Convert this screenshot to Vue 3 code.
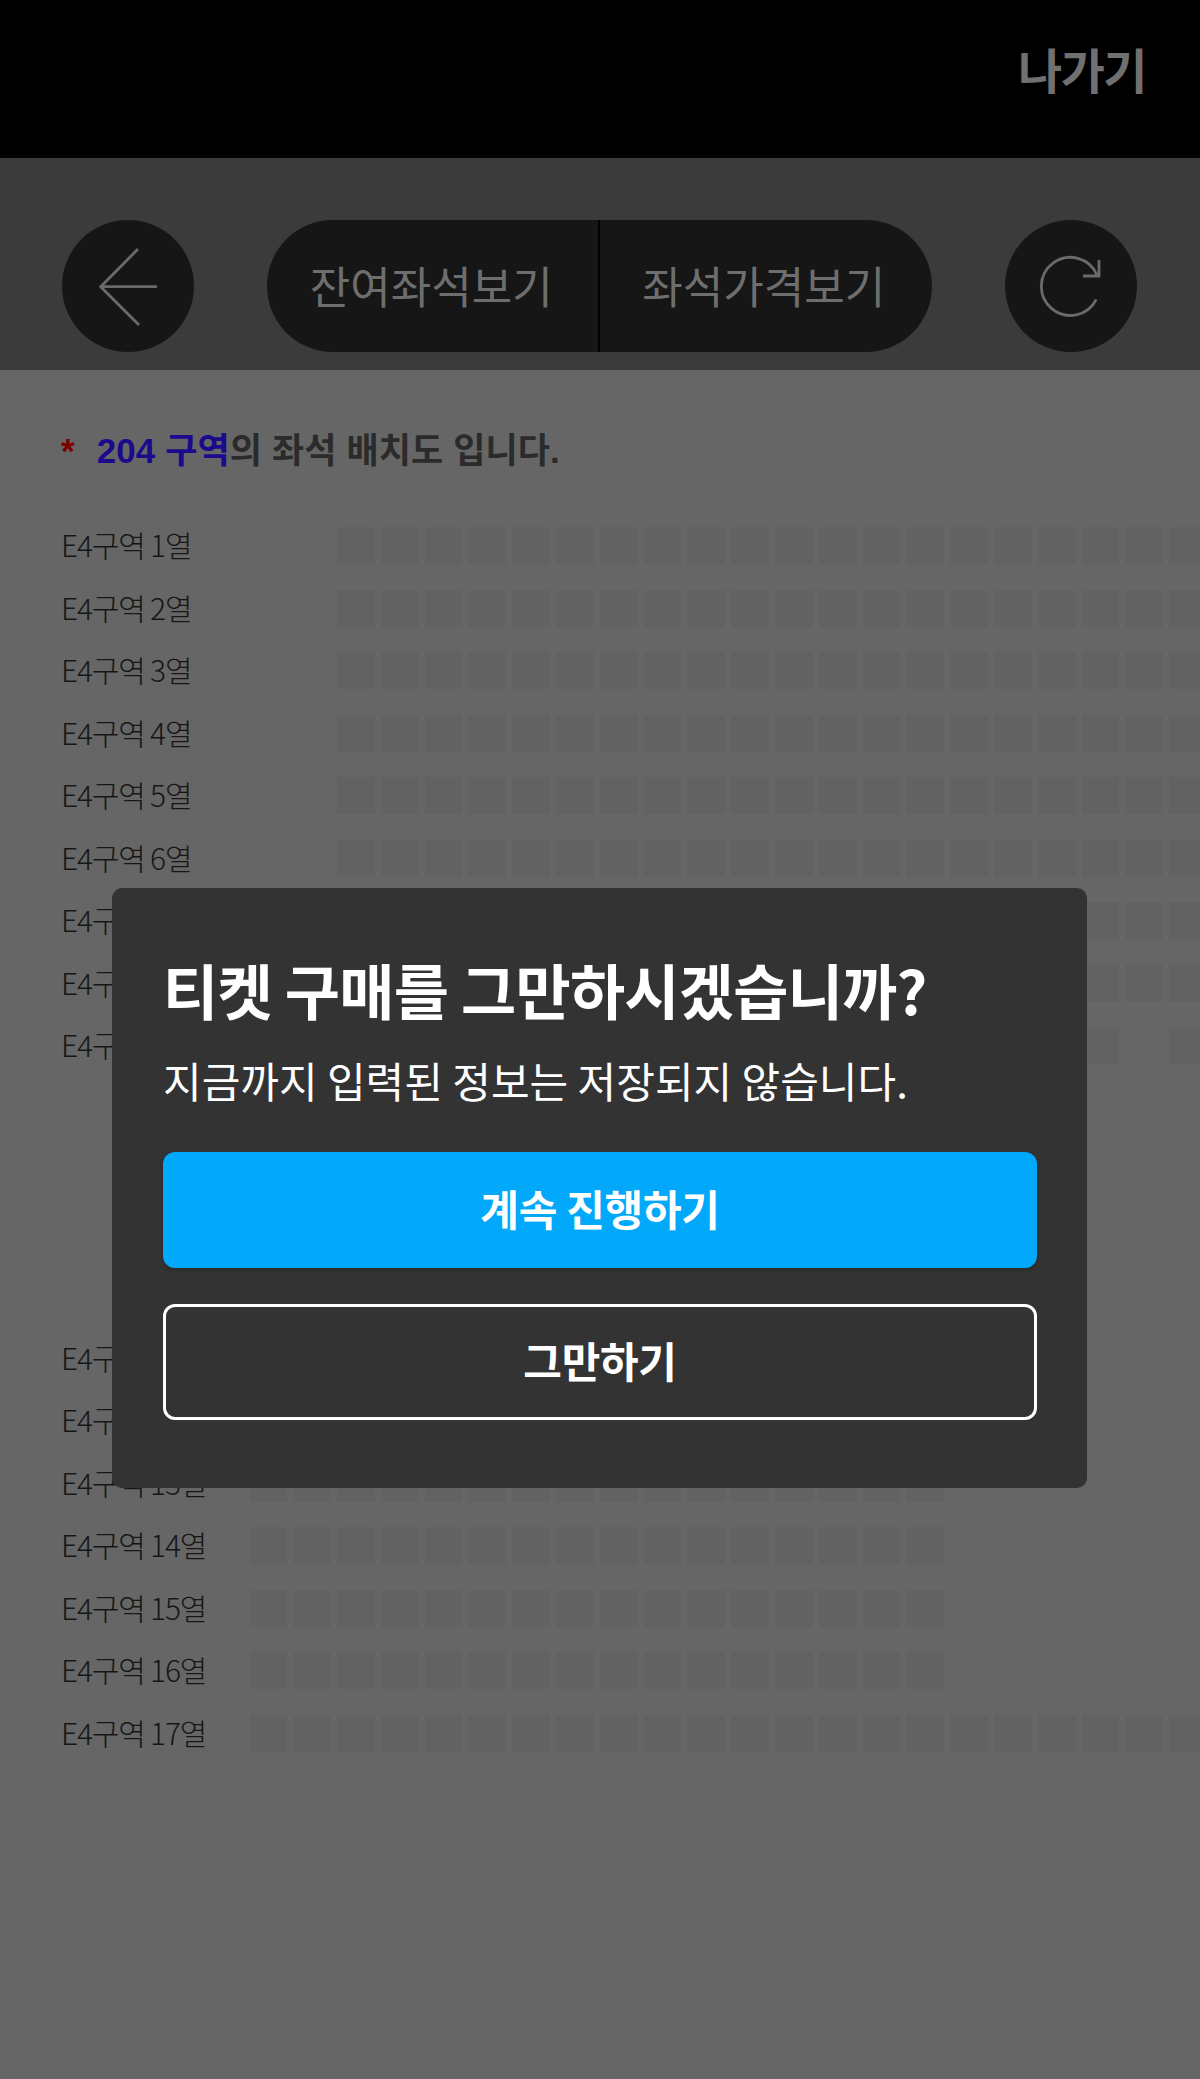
<template>
  <div class="seat-page">
    <div class="top-bar">
      <span class="exit">나가기</span>
    </div>

    <div class="tool-bar">
      <button class="round-btn">
        <svg viewBox="0 0 132 132" width="132" height="132">
          <path d="M76 29 L38.7 66.7 L77 105 M38.7 66.7 H95" />
        </svg>
      </button>
      <div class="view-switch">
        <button class="switch-item">잔여좌석보기</button>
        <button class="switch-item">좌석가격보기</button>
      </div>
      <button class="round-btn">
        <svg viewBox="0 0 132 132" width="132" height="132">
          <path d="M91.3 79.3 A29 29 0 1 1 92 55 M94 40 V56 H78" />
        </svg>
      </button>
    </div>

    <div class="seat-content">
      <p class="guide">
        <span class="star">*</span>
        <span class="zone">204 구역</span>의 좌석 배치도 입니다.
      </p>

      <div
        v-for="row in rows"
        :key="row.no"
        class="seat-row"
        :class="{ 'after-gap': row.no === 11 }"
      >
        <span class="row-name">E4구역 {{ row.no }}열</span>
        <div class="seats">
          <span
            v-for="(on, i) in row.seats"
            :key="i"
            class="seat"
            :class="{ empty: !on }"
          ></span>
        </div>
      </div>
    </div>

    <div class="dialog">
      <h2 class="dialog-title">티켓 구매를 그만하시겠습니까?</h2>
      <p class="dialog-text">지금까지 입력된 정보는 저장되지 않습니다.</p>
      <button class="dialog-btn primary">계속 진행하기</button>
      <button class="dialog-btn outline">그만하기</button>
    </div>
  </div>
</template>

<script setup>
const SLOTS = 22

// 1~9열은 앞 두 칸이 비어 있음
const makeRow = (no) => {
  const seats = []
  for (let i = 0; i < SLOTS; i++) {
    let on = true
    if (no < 10 && i < 2) on = false
    if (no === 9 && i === 20) on = false
    if (no >= 11 && no <= 16 && i > 15) on = false
    seats.push(on)
  }
  return { no, seats }
}

const rowNumbers = [1, 2, 3, 4, 5, 6, 7, 8, 9, 11, 12, 13, 14, 15, 16, 17]
const rows = rowNumbers.map(makeRow)
</script>

<style scoped>
.seat-page {
  position: relative;
  width: 1200px;
  height: 2079px;
  overflow: hidden;
  background: #666;
  font-family: "Noto Sans CJK KR", "Liberation Sans", sans-serif;
}

.top-bar {
  height: 158px;
  background: #000;
  display: flex;
  justify-content: flex-end;
  padding: 43px 54px 0 0;
  box-sizing: border-box;
}

.exit {
  font-size: 48px;
  line-height: 50px;
  font-weight: 700;
  letter-spacing: -1.5px;
  color: #707070;
}

.tool-bar {
  height: 212px;
  box-sizing: border-box;
  padding: 62px 63px 0 62px;
  background: #3b3b3b;
  display: flex;
  justify-content: space-between;
  align-items: flex-start;
}

.round-btn {
  width: 132px;
  height: 132px;
  padding: 0;
  border: none;
  border-radius: 50%;
  background: #161616;
}

.round-btn svg {
  display: block;
  fill: none;
  stroke: #6a6a6a;
  stroke-width: 2.8;
}

.view-switch {
  width: 665px;
  height: 132px;
  border-radius: 66px;
  background: #161616;
  display: flex;
  overflow: hidden;
}

.switch-item {
  flex: 1;
  padding: 0 2px 3px 0;
  border: none;
  background: none;
  font-family: inherit;
  font-size: 44px;
  color: #6e6e6e;
}

.switch-item + .switch-item {
  padding-right: 4px;
  border-left: 2px solid #000;
}

.seat-content {
  padding: 0 0 0 61px;
}

.guide {
  margin: 0;
  padding-top: 61px;
  height: 83.5px;
  box-sizing: content-box;
  font-family: "Liberation Sans", "Noto Sans CJK KR", sans-serif;
  font-size: 35px;
  line-height: 40px;
  font-weight: 700;
  letter-spacing: 0.1px;
  color: #2b2b2b;
}

.star {
  color: #7a0000;
  margin-right: 22px;
}

.zone {
  color: #1b0a8c;
}

.seat-row {
  display: flex;
  align-items: center;
  height: 62.5px;
}

.seat-row.after-gap {
  margin-top: 250px;
}

.row-name {
  flex: none;
  width: 188.5px;
  margin-bottom: 3px;
  font-size: 30px;
  font-weight: 300;
  letter-spacing: -1.2px;
  color: #161616;
}

.seats {
  display: flex;
  flex: none;
  gap: 6px;
}

.seat {
  flex: none;
  width: 37.8px;
  height: 37px;
  background: #626262;
}

.seat.empty {
  background: none;
}

.dialog {
  position: absolute;
  left: 112px;
  top: 888px;
  width: 975px;
  height: 600px;
  box-sizing: border-box;
  padding: 61px 50px 0 51px;
  background: #333;
  border-radius: 10px;
  color: #fff;
}

.dialog-title {
  margin: 0;
  font-size: 60px;
  line-height: 80px;
  font-weight: 700;
  letter-spacing: -0.75px;
  white-space: nowrap;
}

.dialog-text {
  margin: 22px 0 43px;
  font-size: 42px;
  line-height: 58px;
  font-weight: 400;
  white-space: nowrap;
}

.dialog-btn {
  display: block;
  width: 100%;
  height: 116px;
  padding: 0 0 5px;
  box-sizing: border-box;
  border-radius: 12px;
  font-family: inherit;
  font-size: 42px;
  font-weight: 700;
  letter-spacing: -0.3px;
  color: #fff;
}

.dialog-btn.primary {
  border: none;
  background: #02a8f9;
  box-shadow: 0 2px 4px rgba(0, 0, 0, 0.2);
}

.dialog-btn.outline {
  margin-top: 36px;
  border: 3px solid #fff;
  background: none;
}
</style>
